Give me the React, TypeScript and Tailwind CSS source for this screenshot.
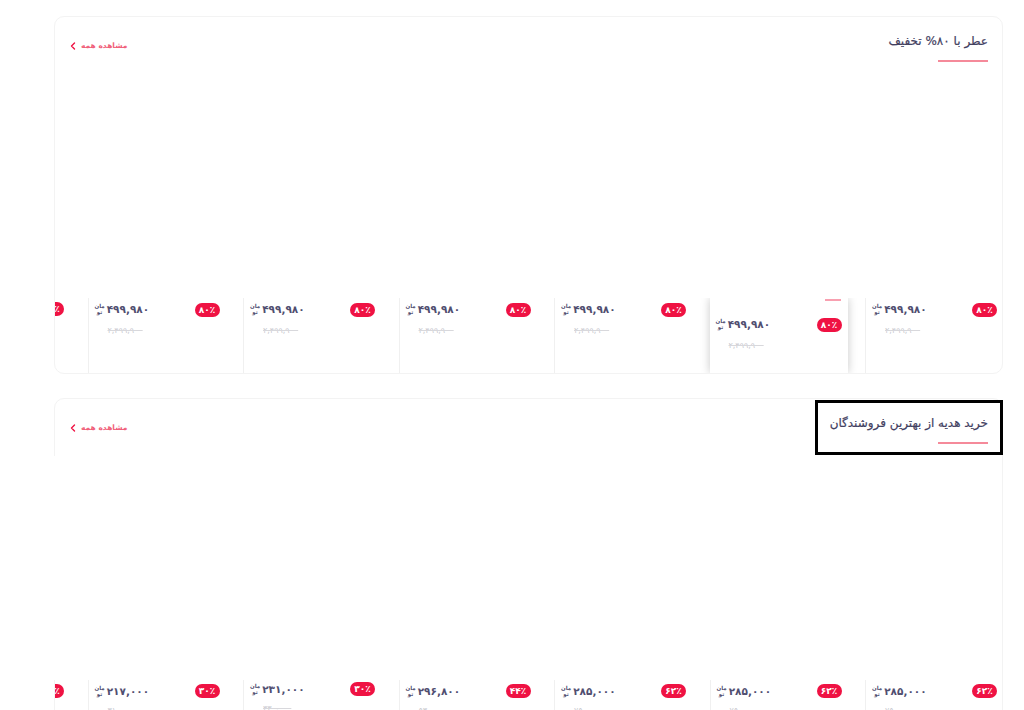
const font = "[font-family:'DejaVu_Sans',sans-serif]";

type Item = { price: string; old: string; off: string };

const first: Item[] = Array.from({ length: 7 }, () => ({ price: "۴۹۹,۹۸۰", old: "۲,۴۹۹,۹۰۰", off: "۸۰٪" }));
const second: Item[] = [
  { price: "۲۸۵,۰۰۰", old: "۷۵۰,۰۰۰", off: "۶۲٪" },
  { price: "۲۸۵,۰۰۰", old: "۷۵۰,۰۰۰", off: "۶۲٪" },
  { price: "۲۸۵,۰۰۰", old: "۷۵۰,۰۰۰", off: "۶۲٪" },
  { price: "۲۹۶,۸۰۰", old: "۵۳۰,۰۰۰", off: "۴۴٪" },
  { price: "۲۳۱,۰۰۰", old: "۳۳۰,۰۰۰", off: "۳۰٪" },
  { price: "۲۱۷,۰۰۰", old: "۳۱۰,۰۰۰", off: "۳۰٪" },
  { price: "۲۱۷,۰۰۰", old: "۳۱۰,۰۰۰", off: "۳۰٪" },
];

function Cell({ item, lifted, raised, edge, lowPrice }: { item: Item; lifted?: boolean; raised?: boolean; edge?: boolean; lowPrice?: boolean }) {
  return (
    <div
      className={
        "w-[138px] shrink-0 px-[6px] " +
        (lifted ? "bg-white shadow-[0_0_9px_rgba(0,0,0,0.22)]" : "border-l border-l-[#f0f0f0]")
      }
    >
      {lifted && (
        <div className="pt-px h-[3px] flex justify-start pr-[1px]">
          <div className="w-[16px] h-[2px] bg-[#f8a0b0]" />
        </div>
      )}
      <div className={"flex items-center justify-between " + (lifted ? "mt-[16px]" : raised ? "mt-[2px]" : "mt-[4px]")}>
        <span className="h-[14px] w-[25px] rounded-full bg-[#ef1243] text-white text-[9px] leading-[14px] font-bold text-center">
          {item.off}
        </span>
        {!edge && (
          <span className={"flex items-center gap-[2px] text-[#504e70] font-bold " + (lowPrice ? "" : "mb-[2px]")}>
            <span className="text-[10.5px] leading-[14px]">{item.price}</span>
            <span className="flex flex-col items-center text-[5.5px] leading-[6px]">
              <span>مان</span>
              <span>تو</span>
            </span>
          </span>
        )}
      </div>
      {!edge && (
        <div className="mt-[7px] h-[12px] pl-[13px] text-left text-[8px] leading-[12px] text-[#c9c9cf] line-through decoration-[#d8d8dc]">
          {item.old}
        </div>
      )}
    </div>
  );
}

function Section({ title, items, boxed, raisedIndex }: { title: string; items: Item[]; boxed?: boolean; raisedIndex?: number }) {
  return (
    <section className="bg-white rounded-[10px] border border-[#f3f3f3]" dir="rtl">
      <div className="h-[57px] flex items-start justify-between">
        <div className={"-mr-px mt-px h-[55px] pt-[12px] px-[12px] border-[3px] " + (boxed ? "border-black" : "border-transparent")}>
          <h2 className="text-[12px] leading-[16px] font-normal [-webkit-text-stroke:0.2px_#42405f] text-[#42405f] whitespace-nowrap">{title}</h2>
          <div className="mt-[11px] h-[2px] w-[50px] bg-[#f58a9a]" />
        </div>
        <a className="mt-[23px] ml-[15px] flex items-center gap-[5px] text-[#f0607a] text-[7.5px] leading-[12px] font-bold">
          <span>مشاهده همه</span>
          <svg width="6" height="8" viewBox="0 0 6 8" fill="none">
            <path d="M4.5 1 L1.5 4 L4.5 7" stroke="#ef1243" strokeWidth="1.4" strokeLinecap="round" strokeLinejoin="round" />
          </svg>
        </a>
      </div>
      <div className={"h-[224px] bg-white " + (boxed ? "-ml-px" : "")} />
      <div className="-mr-px flex gap-[17.5px] h-[75px] overflow-hidden rounded-b-[10px]">
        {items.map((it, i) => (
          <Cell
            key={i}
            item={it}
            lifted={boxed ? false : i === 1}
            raised={i === raisedIndex}
            edge={i === items.length - 1}
            lowPrice={boxed}
          />
        ))}
      </div>
    </section>
  );
}

export default function App() {
  return (
    <div className={"w-[1024px] h-[710px] overflow-hidden bg-white pt-[16px] pl-[54px] pr-[21px] " + font}>
      <Section title="عطر با ۸۰% تخفیف" items={first} />
      <div className="h-[24px]" />
      <Section title="خرید هدیه از بهترین فروشندگان" items={second} boxed raisedIndex={4} />
    </div>
  );
}
